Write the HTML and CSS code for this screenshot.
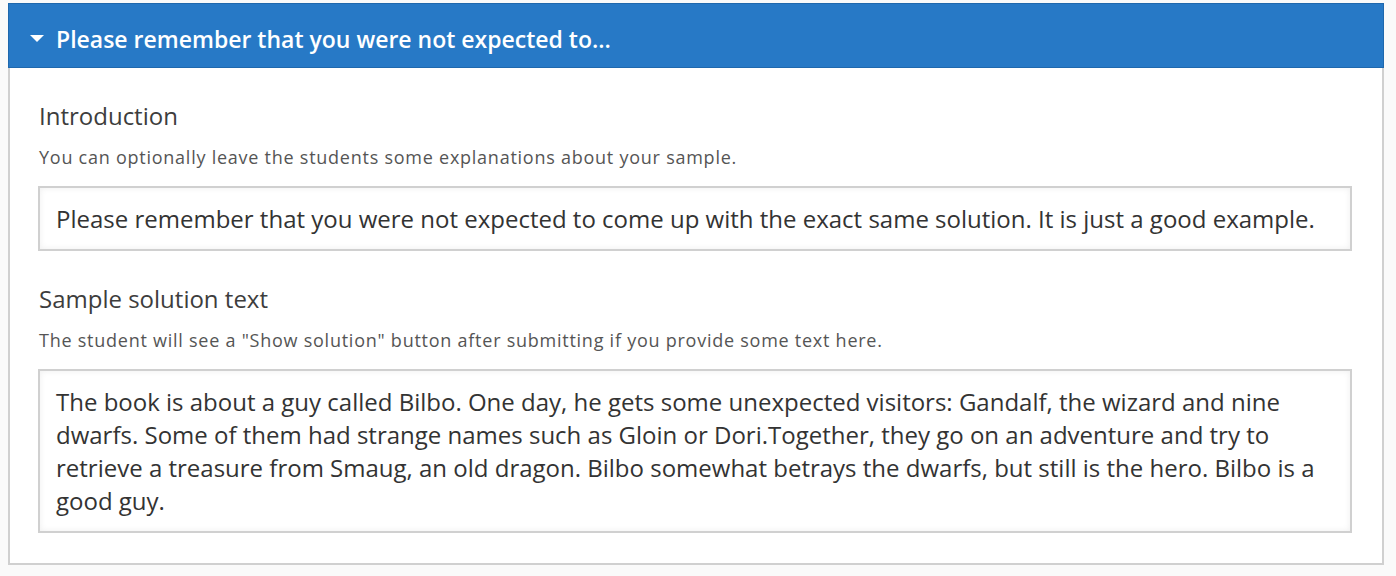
FILE: index.html
```html
<!DOCTYPE html>
<html>
<head>
<meta charset="utf-8">
<link rel="stylesheet" href="styles.css">
</head>
<body>
<div class="panel">
  <div class="panel-header">
    <span class="caret"></span>
    <span class="panel-title">Please remember that you were not expected to...</span>
  </div>
  <div class="panel-body">
    <div class="field">
      <div class="field-label">Introduction</div>
      <div class="field-desc">You can optionally leave the students some explanations about your sample.</div>
      <div class="field-input">Please remember that you were not expected to come up with the exact same solution. It is just a good example.</div>
    </div>
    <div class="field">
      <div class="field-label">Sample solution text</div>
      <div class="field-desc">The student will see a "Show solution" button after submitting if you provide some text here.</div>
      <div class="field-input">The book is about a guy called Bilbo. One day, he gets some unexpected visitors: Gandalf, the wizard and nine dwarfs. Some of them had strange names such as Gloin or Dori.Together, they go on an adventure and try to retrieve a treasure from Smaug, an old dragon. Bilbo somewhat betrays the dwarfs, but still is the hero. Bilbo is a good guy.</div>
    </div>
  </div>
</div>
</body>
</html>
```
FILE: styles.css
```css
html, body {
  margin: 0;
  padding: 0;
  background: #fafafa;
  font-family: "Open Sans", "Noto Sans", sans-serif;
}
body {
  padding: 3px 12px 0 8px;
}
.panel {
  width: 1376px;
  background: #fff;
}
.panel-header {
  height: 63px;
  background: #2779c6;
  border: 1px solid #1f68ad;
  display: flex;
  align-items: center;
  padding-left: 21px;
  box-sizing: content-box;
}
.caret {
  width: 0;
  height: 0;
  border-left: 7px solid transparent;
  border-right: 7px solid transparent;
  border-top: 7px solid #fff;
  margin-right: 12px;
  margin-top: 5px;
}
.panel-title {
  color: #fff;
  font-size: 23px;
  font-weight: 600;
  line-height: 30px;
  padding-top: 6px;
}
.panel-body {
  border: 2px solid #d0d0d0;
  border-top: none;
  padding: 0 30px 30px 28px;
}
.field {
  padding-top: 32px;
}
.field-label {
  font-size: 24px;
  line-height: 32px;
  color: #3d3d3d;
  padding-left: 1px;
}
.field-desc {
  margin-top: 13px;
  font-size: 18px;
  line-height: 24px;
  color: #555;
  letter-spacing: 0.75px;
  padding-left: 1px;
}
.field-input {
  margin-top: 17px;
  border: 2px solid #d0d0d0;
  box-shadow: inset 0 0 6px rgba(0, 0, 0, 0.07);
  padding: 14px 16px;
  font-size: 24px;
  line-height: 33px;
  color: #333;
}
```
